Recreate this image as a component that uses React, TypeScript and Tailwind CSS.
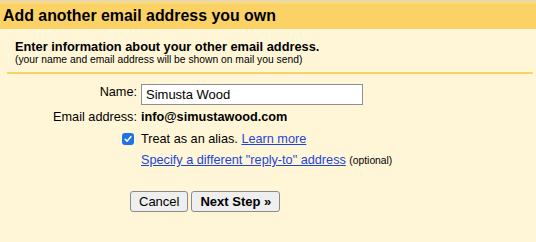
function CheckBox() {
  return (
    <span className="flex h-[12px] w-[12px] items-center justify-center rounded-[3px] bg-[#1d72ea]">
      <svg viewBox="0 0 12 12" className="h-[10px] w-[10px]" fill="none">
        <path
          d="M2.6 6.3 L4.9 8.6 L9.4 3.2"
          stroke="#ffffff"
          strokeWidth="1.9"
          strokeLinecap="round"
          strokeLinejoin="round"
        />
      </svg>
    </span>
  );
}

function Row({
  label,
  children,
  className = "",
}: {
  label?: React.ReactNode;
  children?: React.ReactNode;
  className?: string;
}) {
  return (
    <div className={`flex ${className}`}>
      <div className="flex w-[137px] shrink-0 justify-end text-right">{label}</div>
      <div className="ml-[4px] flex items-center">{children}</div>
    </div>
  );
}

export default function App() {
  return (
    <div className="min-h-screen bg-[#fff6d7] font-['Liberation_Sans',Arial,sans-serif] text-black">
      <div className="h-px bg-[#d9d9d9]" />
      <div className="h-[28px] border-t-[3px] border-[#fbd879] bg-[#fad266] pl-[3px] text-[15.9px] font-bold leading-[23px]">
        Add another email address you own
      </div>

      <div className="pl-[15px] pt-[11px]">
        <div className="text-[12.8px] font-bold leading-[14px]">
          Enter information about your other email address.
        </div>
        <div className="text-[10.3px] leading-[12px]">
          (your name and email address will be shown on mail you send)
        </div>
      </div>

      <div className="ml-[7px] mr-[3px] mt-[6px] h-[2px] bg-[#fad266]" />

      <div className="pt-[10px] text-[12.7px]">
        <Row
          className="mb-[2px] items-start"
          label={<span className="pt-[1px] leading-[14px]">Name:</span>}
        >
          <input
            className="h-[21px] w-[222px] border border-[#8e8e8e] bg-white pl-[4px] text-[13px] leading-[19px] outline-none"
            defaultValue="Simusta Wood"
          />
        </Row>

        <Row
          className="h-[21px] items-center leading-[21px]"
          label={<span>Email address:</span>}
        >
          <span className="font-bold">info@simustawood.com</span>
        </Row>

        <Row
          className="h-[22px] items-center leading-[22px]"
          label={
            <span className="mr-[3px] flex items-center">
              <CheckBox />
            </span>
          }
        >
          <span>
            Treat as an alias.{" "}
            <a href="#" className="text-[#1d45d8] underline">
              Learn more
            </a>
          </span>
        </Row>

        <Row className="h-[21px] items-center leading-[21px]">
          <span>
            <a href="#" className="text-[#1d45d8] underline">
              Specify a different "reply-to" address
            </a>{" "}
            <span className="text-[10.3px]">(optional)</span>
          </span>
        </Row>

        <div className="flex gap-[3px] pl-[130px] pt-[20px]">
          <button className="h-[21px] rounded-[3px] border border-[#8a8a8a] bg-[#efefef] px-[8px] text-[13px] leading-[19px]">
            Cancel
          </button>
          <button className="h-[21px] rounded-[3px] border border-[#8a8a8a] bg-[#efefef] px-[8px] text-[13px] font-bold leading-[19px]">
            Next Step »
          </button>
        </div>
      </div>
    </div>
  );
}
